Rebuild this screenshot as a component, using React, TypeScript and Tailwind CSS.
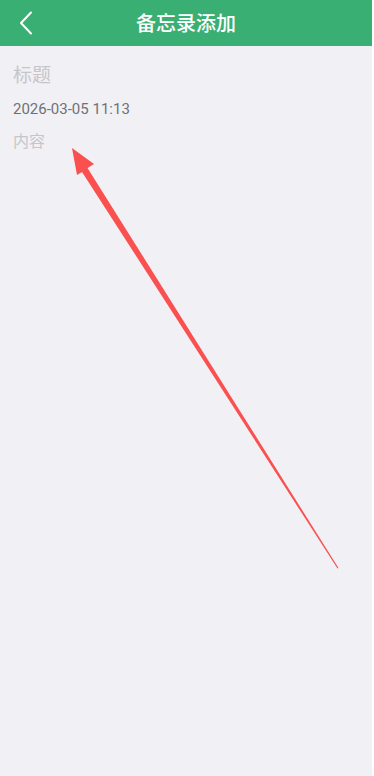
import React from 'react';

function App() {
  return (
    <div
      className="relative h-[776px] w-[374px] overflow-hidden bg-white"
      style={{ fontFamily: '"Noto Sans CJK SC", "Noto Sans", sans-serif' }}
    >
      <div className="flex h-full w-[372px] flex-col bg-[#f0f0f5]">
        <header className="relative flex h-[46px] items-center justify-center bg-[#3aaf74]">
          <button className="absolute left-[14px] top-[9px] flex h-[28px] w-[24px] items-center justify-center">
            <svg width="14" height="24" viewBox="0 0 14 24" fill="none">
              <path d="M12 1.5L2 12l10 10.5" stroke="#fff" strokeWidth="2" strokeLinecap="round" strokeLinejoin="round" />
            </svg>
          </button>
          <h1 className="text-[20px] font-medium leading-[28px] text-white">备忘录添加</h1>
        </header>
        <main className="flex flex-col px-[13px] pt-[15px]">
          <div className="text-[19px] leading-[26px] text-[#c6c6ca]">标题</div>
          <div
            className="mt-[12px] text-[15px] leading-[20px] text-[#707074]"
            style={{ fontFamily: '"Roboto", "Noto Sans", sans-serif' }}
          >
            2026-03-05 11:13
          </div>
          <div className="mt-[10px] text-[16px] leading-[22px] text-[#c6c6ca]">内容</div>
        </main>
      </div>
      <svg className="pointer-events-none absolute left-0 top-0" width="374" height="776" viewBox="0 0 374 776">
        <polygon
          points="72,148 94,164 87.5,168 338.5,568 337.5,568.5 82,172 77,175"
          fill="#fa5050"
        />
      </svg>
    </div>
  );
}

export default App;
